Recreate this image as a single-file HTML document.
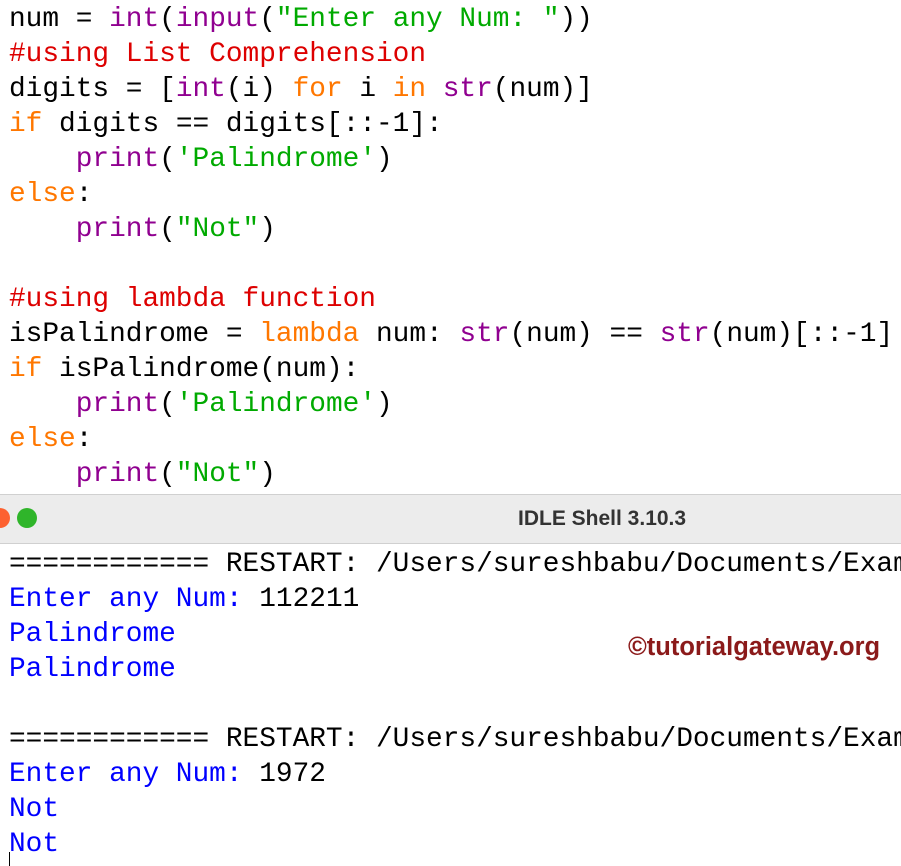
<!DOCTYPE html>
<html><head><meta charset="utf-8"><style>
html,body{margin:0;padding:0;width:901px;height:866px;overflow:hidden;background:#fff;position:relative}
.l{position:absolute;left:9px;width:892px;overflow:hidden;font-family:"Liberation Mono",monospace;font-size:27.8px;line-height:35px;height:35px;white-space:pre;color:#000;margin-top:2px}
.k{color:#ff7700}.b{color:#900090}.s{color:#00aa00}.c{color:#dd0000}.u{color:#0000ff}
#bar{position:absolute;left:0;top:494px;width:901px;height:48px;background:#ececec;border-top:1px solid #d0d0d0;border-bottom:1px solid #d0d0d0}
#t{position:absolute;left:518px;top:0;line-height:48px;font-family:"Liberation Sans",sans-serif;font-weight:bold;font-size:21px;color:#333}
.dot{position:absolute;top:13px;width:20px;height:20px;border-radius:50%}
#wm{position:absolute;left:628px;top:633px;font-family:"Liberation Sans",sans-serif;font-weight:bold;font-size:25.5px;color:#8b1a1a}
</style></head><body>
<div class="l" style="top:0">num = <span class="b">int</span>(<span class="b">input</span>(<span class="s">"Enter any Num: "</span>))</div>
<div class="l c" style="top:35px">#using List Comprehension</div>
<div class="l" style="top:70px">digits = [<span class="b">int</span>(i) <span class="k">for</span> i <span class="k">in</span> <span class="b">str</span>(num)]</div>
<div class="l" style="top:105px"><span class="k">if</span> digits == digits[::-1]:</div>
<div class="l" style="top:140px">    <span class="b">print</span>(<span class="s">'Palindrome'</span>)</div>
<div class="l k" style="top:175px">else<span style="color:#000">:</span></div>
<div class="l" style="top:210px">    <span class="b">print</span>(<span class="s">"Not"</span>)</div>
<div class="l c" style="top:280px">#using lambda function</div>
<div class="l" style="top:315px">isPalindrome = <span class="k">lambda</span> num: <span class="b">str</span>(num) == <span class="b">str</span>(num)[::-1]</div>
<div class="l" style="top:350px"><span class="k">if</span> isPalindrome(num):</div>
<div class="l" style="top:385px">    <span class="b">print</span>(<span class="s">'Palindrome'</span>)</div>
<div class="l k" style="top:420px">else<span style="color:#000">:</span></div>
<div class="l" style="top:455px">    <span class="b">print</span>(<span class="s">"Not"</span>)</div>
<div id="bar"><div class="dot" style="left:-10px;background:#fd6130"></div><div class="dot" style="left:17px;background:#2fb52a"></div><div id="t">IDLE Shell 3.10.3</div></div>
<div class="l" style="top:545px">============ RESTART: /Users/sureshbabu/Documents/Examples</div>
<div class="l" style="top:580px"><span class="u">Enter any Num: </span>112211</div>
<div class="l u" style="top:615px">Palindrome</div>
<div class="l u" style="top:650px">Palindrome</div>
<div class="l" style="top:720px">============ RESTART: /Users/sureshbabu/Documents/Examples</div>
<div class="l" style="top:755px"><span class="u">Enter any Num: </span>1972</div>
<div class="l u" style="top:790px">Not</div>
<div class="l u" style="top:825px">Not</div>
<div style="position:absolute;left:9px;top:852px;width:1px;height:14px;background:#000"></div>
<div id="wm">©tutorialgateway.org</div>
</body></html>
